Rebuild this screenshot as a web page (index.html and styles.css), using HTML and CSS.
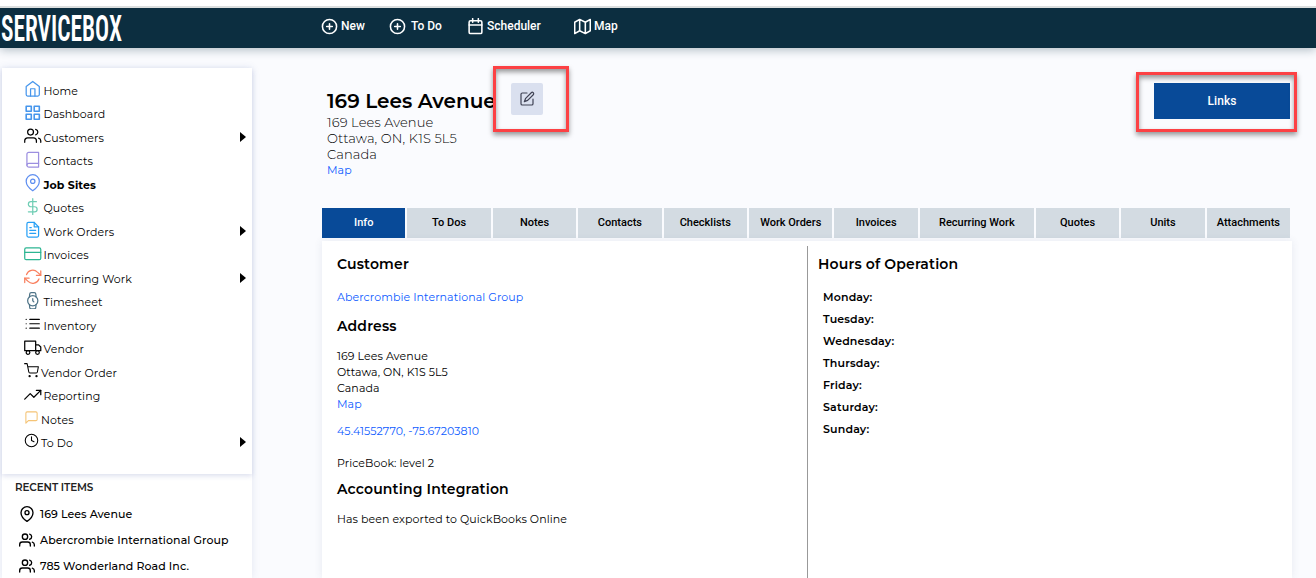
FILE: index.html
```
<!DOCTYPE html>
<html lang="en">
<head>
    <meta charset="UTF-8">
    <meta name="viewport" content="width=device-width, initial-scale=1.0">
    <title>ServiceBox - Job Site</title>
    <link rel="stylesheet" href="styles.css">
</head>
<body>

    <!-- Top bar -->
    <header class="topbar">
        <svg class="logo" width="124" height="40" viewBox="0 0 124 40">
            <text x="1" y="33" textLength="121" lengthAdjust="spacingAndGlyphs">SERVICEBOX</text>
        </svg>
        <nav class="topnav">
            <a class="top-new"><svg class="icon" viewBox="0 0 24 24"><circle cx="12" cy="12" r="10"/><path d="M12 8v8M8 12h8"/></svg>New</a>
            <a class="top-todo"><svg class="icon" viewBox="0 0 24 24"><circle cx="12" cy="12" r="10"/><path d="M12 8v8M8 12h8"/></svg>To Do</a>
            <a class="top-scheduler"><svg class="icon" viewBox="0 0 24 24"><rect x="3" y="4" width="18" height="18" rx="2"/><path d="M16 1v5M8 1v5M3 10h18"/></svg>Scheduler</a>
            <a class="top-map"><svg class="icon" viewBox="0 0 24 24"><path d="M1 6v16l7-4 8 4 7-4V2l-7 4-8-4-7 4zM8 2v16M16 6v16"/></svg>Map</a>
        </nav>
    </header>

    <div class="page">
        <!-- Sidebar -->
        <aside class="sidebar">
            <ul class="menu">
                <li><svg class="icon blue" viewBox="0 0 24 24"><path d="M3 9l9-7 9 7v11a2 2 0 0 1-2 2H5a2 2 0 0 1-2-2z"/><path d="M9 22V12h6v10"/></svg>Home</li>
                <li><svg class="icon blue thick" viewBox="0 0 24 24"><path d="M3 3h7v7H3zM14 3h7v7h-7zM14 14h7v7h-7zM3 14h7v7H3z"/></svg>Dashboard</li>
                <li class="has-sub"><svg class="icon" viewBox="0 0 24 24"><path d="M17 21v-2a4 4 0 0 0-4-4H5a4 4 0 0 0-4 4v2"/><circle cx="9" cy="7" r="4"/><path d="M23 21v-2a4 4 0 0 0-3-3.87M16 3.13a4 4 0 0 1 0 7.75"/></svg>Customers</li>
                <li><svg class="icon purple" viewBox="0 0 24 24"><path d="M4 19.500A2.500 2.500 0 0 1 6.500 17H20"/><path d="M6.500 2H20v20H6.500A2.500 2.500 0 0 1 4 19.500v-15A2.500 2.500 0 0 1 6.500 2z"/></svg>Contacts</li>
                <li class="active"><svg class="icon pin-blue" viewBox="0 0 24 24"><path d="M21 10c0 7-9 13-9 13s-9-6-9-13a9 9 0 0 1 18 0z"/><circle cx="12" cy="10" r="3"/></svg>Job Sites</li>
                <li><svg class="icon mint" viewBox="0 0 24 24"><path d="M12 1v22M17 5H9.500a3.500 3.500 0 0 0 0 7h5a3.500 3.500 0 0 1 0 7H6"/></svg>Quotes</li>
                <li class="has-sub"><svg class="icon sky" viewBox="0 0 24 24"><path d="M14 2H6a2 2 0 0 0-2 2v16a2 2 0 0 0 2 2h12a2 2 0 0 0 2-2V8z"/><path d="M14 2v6h6M16 13H8M16 17H8M10 9H8"/></svg>Work Orders</li>
                <li><svg class="icon green" viewBox="0 0 24 24"><rect x="1" y="4" width="22" height="16" rx="2"/><path d="M1 10h22"/></svg>Invoices</li>
                <li class="has-sub"><svg class="icon coral" viewBox="0 0 24 24"><path d="M23 4v6h-6M1 20v-6h6"/><path d="M3.510 9a9 9 0 0 1 14.850-3.360L23 10M1 14l4.640 4.360A9 9 0 0 0 20.490 15"/></svg>Recurring Work</li>
                <li><svg class="icon slate" viewBox="0 0 24 24"><circle cx="12" cy="12" r="7"/><path d="M12 9v3l1.500 1.500"/><path d="M16.510 17.350l-.35 3.830a2 2 0 0 1-2 1.820H9.830a2 2 0 0 1-2-1.820l-.35-3.830m.01-10.700l.35-3.830A2 2 0 0 1 9.830 1h4.350a2 2 0 0 1 2 1.820l.35 3.830"/></svg>Timesheet</li>
                <li><svg class="icon" viewBox="0 0 24 24"><path d="M8 6h13M8 12h13M8 18h13M3 6h.01M3 12h.01M3 18h.01"/></svg>Inventory</li>
                <li><svg class="icon" viewBox="0 0 24 24"><path d="M1 3h15v13H1zM16 8h4l3 3v5h-7z"/><circle cx="5.500" cy="18.500" r="2.500"/><circle cx="18.500" cy="18.500" r="2.500"/></svg>Vendor</li>
                <li class="small"><svg class="icon" viewBox="0 0 24 24"><circle cx="9" cy="21" r="1"/><circle cx="20" cy="21" r="1"/><path d="M1 1h4l2.680 13.390a2 2 0 0 0 2 1.610h9.720a2 2 0 0 0 2-1.610L23 6H6"/></svg>Vendor Order</li>
                <li><svg class="icon" viewBox="0 0 24 24"><path d="M23 6l-9.500 9.500-5-5L1 18"/><path d="M17 6h6v6"/></svg>Reporting</li>
                <li class="small"><svg class="icon amber" viewBox="0 0 24 24"><path d="M21 15a2 2 0 0 1-2 2H7l-4 4V5a2 2 0 0 1 2-2h14a2 2 0 0 1 2 2z"/></svg>Notes</li>
                <li class="small has-sub"><svg class="icon" viewBox="0 0 24 24"><circle cx="12" cy="12" r="10"/><path d="M12 6v6l4 2"/></svg>To Do</li>
            </ul>

            <div class="recent">
                <h4>RECENT ITEMS</h4>
                <ul>
                    <li><svg class="icon" viewBox="0 0 24 24"><path d="M21 10c0 7-9 13-9 13s-9-6-9-13a9 9 0 0 1 18 0z"/><circle cx="12" cy="10" r="3"/></svg>169 Lees Avenue</li>
                    <li><svg class="icon" viewBox="0 0 24 24"><path d="M17 21v-2a4 4 0 0 0-4-4H5a4 4 0 0 0-4 4v2"/><circle cx="9" cy="7" r="4"/><path d="M23 21v-2a4 4 0 0 0-3-3.87M16 3.13a4 4 0 0 1 0 7.75"/></svg>Abercrombie International Group</li>
                    <li><svg class="icon" viewBox="0 0 24 24"><path d="M17 21v-2a4 4 0 0 0-4-4H5a4 4 0 0 0-4 4v2"/><circle cx="9" cy="7" r="4"/><path d="M23 21v-2a4 4 0 0 0-3-3.87M16 3.13a4 4 0 0 1 0 7.75"/></svg>785 Wonderland Road Inc.</li>
                </ul>
            </div>
        </aside>

        <main class="content">
            <div class="site-header">
                <div class="site-info">
                    <h1>169 Lees Avenue</h1>
                    <p>169 Lees Avenue<br>Ottawa, ON, K1S 5L5<br>Canada</p>
                    <a class="link">Map</a>
                </div>
                <div class="edit-wrap">
                    <button class="edit-btn"><svg class="icon" viewBox="0 0 24 24"><path d="M12 3H5a2 2 0 0 0-2 2v14a2 2 0 0 0 2 2h14a2 2 0 0 0 2-2v-7"/><path d="M18.400 2.600a2.100 2.100 0 0 1 3 3L13 14l-5 2 2-5z"/></svg></button>
                    <span class="callout callout-edit"></span>
                </div>
                <div class="links-wrap">
                    <button class="links-btn">Links</button>
                    <span class="callout callout-links"></span>
                </div>
            </div>

            <!-- Tabs -->
            <div class="tabs">
                <a class="tab active">Info</a>
                <a class="tab">To Dos</a>
                <a class="tab">Notes</a>
                <a class="tab">Contacts</a>
                <a class="tab">Checklists</a>
                <a class="tab">Work Orders</a>
                <a class="tab">Invoices</a>
                <a class="tab wide">Recurring Work</a>
                <a class="tab">Quotes</a>
                <a class="tab">Units</a>
                <a class="tab">Attachments</a>
            </div>

            <div class="panel">
                <section class="details">
                    <h3>Customer</h3>
                    <p class="customer"><a class="link">Abercrombie International Group</a></p>
                    <h3>Address</h3>
                    <p class="address">169 Lees Avenue<br>Ottawa, ON, K1S 5L5<br>Canada<br><a class="link">Map</a></p>
                    <p class="geo"><a class="link">45.41552770, -75.67203810</a></p>
                    <p class="pricebook">PriceBook: level 2</p>
                    <h3>Accounting Integration</h3>
                    <p class="export">Has been exported to QuickBooks Online</p>
                </section>
                <section class="hours">
                    <h3>Hours of Operation</h3>
                    <ul>
                        <li>Monday:</li>
                        <li>Tuesday:</li>
                        <li>Wednesday:</li>
                        <li>Thursday:</li>
                        <li>Friday:</li>
                        <li>Saturday:</li>
                        <li>Sunday:</li>
                    </ul>
                </section>
            </div>
        </main>
    </div>

</body>
</html>
```
FILE: styles.css
```
* {
    box-sizing: border-box;
}

body {
    margin: 0;
    height: 578px;
    overflow: hidden;
    display: flex;
    flex-direction: column;
    background: #fafbfe;
    color: #000;
    font-family: Montserrat, Inter, sans-serif;
    font-size: 11px;
    line-height: 16px;
}

h1, h3, h4, p, ul {
    margin: 0;
    padding: 0;
}

ul {
    list-style: none;
}

.icon {
    flex: none;
    width: 18px;
    height: 18px;
    fill: none;
    stroke: currentColor;
    stroke-width: 1.7;
    stroke-linecap: round;
    stroke-linejoin: round;
}

.link {
    color: #0d5bff;
}

/* Top bar */
.topbar {
    flex: none;
    display: flex;
    height: 48px;
    padding-top: 8px;
    background: linear-gradient(#fff 6px, #dcdfdf 6px, #dcdfdf 8px, #0c2e40 8px);
    box-shadow: 0 2px 9px rgba(12, 46, 64, 0.3);
}

.logo {
    flex: none;
    overflow: visible;
    fill: #fff;
    font-family: Roboto, sans-serif;
    font-size: 37px;
    font-weight: 600;
    font-stretch: 75%;
}

.topnav {
    display: flex;
    align-items: center;
    height: 36px;
    padding-left: 197px;
    color: #fff;
    font-family: Roboto, sans-serif;
    font-size: 12px;
    font-weight: 500;
}

.topnav a {
    display: flex;
    align-items: center;
    gap: 3px;
}

.topnav .icon {
    width: 17px;
    height: 17px;
    stroke-width: 2.2;
}

.topnav .top-new {
    width: 68px;
}

.topnav .top-todo {
    width: 78px;
    gap: 5px;
}

.topnav .top-scheduler {
    width: 107px;
}

.topnav .top-map {
    gap: 3px;
}

.page {
    flex: 1;
    display: flex;
    min-height: 0;
}

/* Sidebar */
.sidebar {
    flex: none;
    width: 250px;
    margin: 20px 0 0 2px;
    background: #fff;
    box-shadow: 0 0 8px rgba(60, 80, 160, 0.12);
}

.menu {
    height: 406px;
    padding: 11px 6px 0 22px;
    box-shadow: 0 2px 5px rgba(60, 80, 160, 0.18);
}

.menu li {
    display: flex;
    align-items: center;
    gap: 2px;
    height: 23.5px;
    letter-spacing: 0.1px;
}

.menu .icon {
    width: 17.5px;
    height: 17.5px;
    margin-top: -4px;
}

.menu .thick {
    stroke-width: 2.2;
}

.menu .small .icon {
    width: 15px;
    height: 15px;
    margin-top: -5px;
}

.menu .active {
    font-weight: 700;
}

.menu .has-sub::after {
    content: '';
    margin: -2px 0 0 auto;
    border-left: 6px solid #000;
    border-top: 5px solid transparent;
    border-bottom: 5px solid transparent;
}

.blue { color: #4796ec; }
.purple { color: #9c8fe0; }
.pin-blue { color: #5f8ff0; }
.mint { color: #6fcdb4; }
.sky { color: #28a0f5; }
.green { color: #2cb592; }
.coral { color: #f9805f; }
.slate { color: #4f7488; }
.amber { color: #f5c476; }

.recent {
    padding: 6px 0 0 13px;
    font-weight: 500;
}

.recent h4 {
    font-size: 10.4px;
    font-weight: 600;
    letter-spacing: -0.1px;
    color: #222;
}

.recent ul {
    padding: 5px 0 0 4px;
}

.recent li {
    display: flex;
    align-items: center;
    gap: 5px;
    height: 26px;
    letter-spacing: 0.08px;
}

.recent .icon {
    width: 16px;
    height: 16px;
    stroke-width: 2;
}

/* Content */
.content {
    flex: 1;
    display: flex;
    flex-direction: column;
    padding: 35px 24px 0 70px;
}

.site-header {
    flex: none;
    display: flex;
    height: 125px;
    padding-right: 2px;
}

.site-info {
    width: 189px;
    padding: 5px 0 0 5px;
    font-size: 13px;
    white-space: nowrap;
}

.site-info h1 {
    font-size: 20px;
    font-weight: 600;
    line-height: 26px;
}

.site-info p {
    font-weight: 300;
    letter-spacing: 0.12px;
}

.site-info .link {
    display: block;
    font-size: 11px;
    letter-spacing: 0.1px;
}

.edit-wrap, .links-wrap {
    position: relative;
}

.edit-btn {
    display: flex;
    align-items: center;
    justify-content: center;
    width: 32px;
    height: 32px;
    padding: 0 1px 0 0;
    border: 0;
    border-radius: 2px;
    background: #dae0ef;
    color: #3f4254;
}

.edit-btn .icon {
    width: 16px;
    height: 16px;
    stroke-width: 1.8;
}

.links-wrap {
    margin-left: auto;
}

.links-btn {
    width: 136px;
    height: 36px;
    border: 0;
    background: #084a98;
    color: #fff;
    font-family: Roboto, sans-serif;
    font-size: 12px;
    font-weight: 500;
    letter-spacing: 0.1px;
}

/* Red highlight frames */
.callout {
    position: absolute;
    border: 3px solid #fc4144;
    box-shadow: 0 3px 5px rgba(0, 0, 0, 0.4), inset 0 3px 5px rgba(0, 0, 0, 0.4);
}

.callout-edit {
    left: -18px;
    top: -17px;
    width: 76px;
    height: 66px;
}

.callout-links {
    left: -18px;
    top: -11px;
    width: 161px;
    height: 60px;
}

/* Tabs */
.tabs {
    flex: none;
    display: flex;
    gap: 2px;
    height: 30px;
    margin-right: 2px;
    font-family: Roboto, sans-serif;
    font-weight: 500;
}

.tab {
    flex: 1 1 0;
    height: 30px;
    line-height: 30px;
    text-align: center;
    white-space: nowrap;
    background: #d3dbe2;
}

.tab.wide {
    flex: 0 0 114px;
}

.tab.active {
    background: #084a98;
    color: #fff;
}

.panel {
    flex: 1;
    display: flex;
    margin-top: 3px;
    padding-top: 5px;
    background: #fff;
    box-shadow: 0 0 8px rgba(60, 80, 120, 0.1);
    letter-spacing: 0.08px;
}

.panel h3 {
    font-size: 14px;
    font-weight: 600;
    line-height: 20px;
    letter-spacing: 0.16px;
}

.details {
    width: 486px;
    padding: 8px 0 0 15px;
    border-right: 1px solid #999;
}

.customer {
    padding: 15px 0 11px;
}

.address {
    padding: 12px 0 11px;
}

.geo {
    padding-bottom: 16px;
}

.pricebook {
    padding-bottom: 8px;
}

.export {
    padding-top: 12px;
}

.hours {
    padding: 8px 0 0 10px;
}

.hours ul {
    padding: 12px 0 0 5px;
    font-weight: 600;
    letter-spacing: 0.16px;
}

.hours li {
    line-height: 22px;
}
```
